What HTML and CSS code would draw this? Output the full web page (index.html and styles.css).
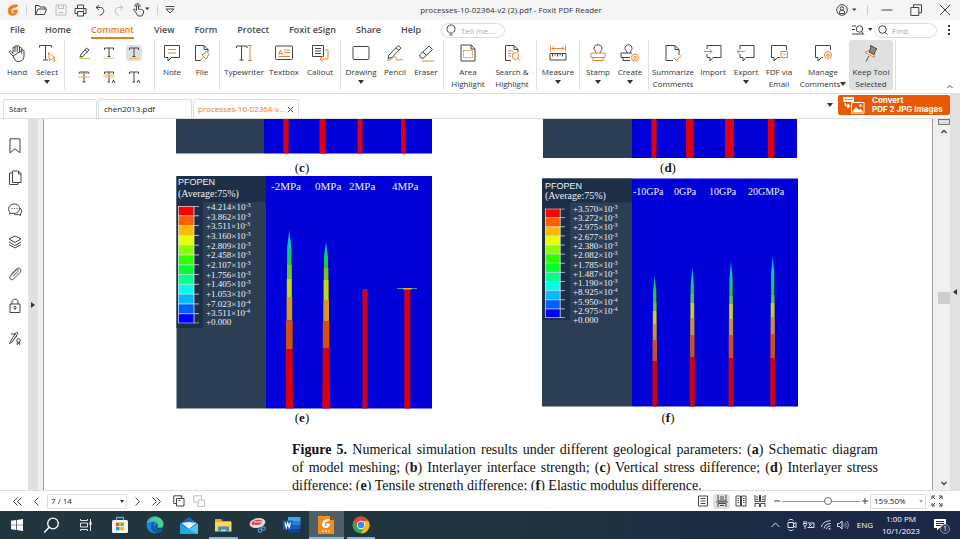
FILE: index.html
```html
<!DOCTYPE html>
<html lang="en">
<head>
<meta charset="utf-8">
<title>processes-10-02364-v2 (2).pdf - Foxit PDF Reader</title>
<link rel="stylesheet" href="styles.css">
</head>
<body>
<header class="titlebar">
  <div class="quick">
    <svg class="logo" width="12" height="12" viewBox="0 0 12 12"><path d="M11 1C6 0 1 2 1 7c0 3 2 4.500 4.500 4.500C9 11.500 10.500 9 10.500 6H6.500L5.500 7.800H8C7.500 9 6.500 9.500 5.500 9.300 3 8.500 4 4 8 3.500 9.500 3.300 10.500 2.500 11 1Z" fill="#f07d1a" stroke="#f07d1a" stroke-width=".5"/></svg>
    <span class="vline"></span>
    <button aria-label="Open"><svg width="14" height="12" viewBox="0 0 14 12"><path d="M1.500 10.500V1.500H5l1 1.500h5v2M1.500 10.500 4 5h8.500l-2 5.500Z"/></svg></button>
    <button aria-label="Save" class="dim"><svg width="12" height="12" viewBox="0 0 12 12"><path d="M1 1h10v10H1ZM3.500 1v3.500h5V1M3.500 8.500h5"/></svg></button>
    <button aria-label="Print"><svg width="13" height="13" viewBox="0 0 13 13"><path d="M3.500 4V1h6v3M3 9.500H1v-5h11v5h-2M3.500 7.500h6V12h-6ZM9 6h1.500"/></svg></button>
    <button aria-label="Undo"><svg width="12" height="12" viewBox="0 0 12 12"><path d="M5 1 2 3.500 5 6M2 3.500h4.500c4.500 0 4.500 7.500-1 7.500"/></svg></button>
    <button aria-label="Redo" class="dim"><svg width="12" height="12" viewBox="0 0 12 12"><path d="m7 1 3 2.500L7 6m3-2.500H5.500C1 3.500 1 11 6 11"/></svg></button>
    <button aria-label="Touch mode"><svg width="18" height="14" viewBox="0 0 18 14"><path d="M3.500 9 2 7.500C1 6.500 2.300 5.500 3.200 6.500l1.300 1V3c0-1.500 2-1.500 2 0v3.500c.5-.8 1.500-.5 1.800.2.500-.7 1.500-.4 1.700.3.700-.5 1.500 0 1.500.8V10l-1.500 3h-4ZM3 4C2.500 1 4.500.700 5.500.700S8.500 1.500 8 4"/><path class="fill" d="M13 4.500h4.500L15.200 7Z"/></svg></button>
    <span class="vline"></span>
    <button aria-label="Customize toolbar"><svg width="10" height="10" viewBox="0 0 10 10"><path d="M.5 1.500h9M1 4h8L5 8Z"/></svg></button>
  </div>
  <h1>processes-10-02364-v2 (2).pdf - Foxit PDF Reader</h1>
  <div class="window-buttons">
    <button aria-label="Account"><svg width="22" height="12" viewBox="0 0 22 12"><circle cx="6" cy="6" r="5.300"/><circle cx="6" cy="4.500" r="1.700"/><path d="M3.500 9.500V8c0-2.200 5-2.200 5 0v1.500Z"/><path class="fill" d="M16 4.500h4.500L18.200 7Z"/></svg></button>
    <span class="vline"></span>
    <button aria-label="Minimize"><svg width="12" height="12" viewBox="0 0 12 12"><path d="M.5 6h11"/></svg></button>
    <button aria-label="Restore"><svg width="12" height="12" viewBox="0 0 12 12"><path d="M.8 3.500h8v8h-8ZM3.500 3V.8h8v8H9"/></svg></button>
    <button aria-label="Close"><svg width="12" height="12" viewBox="0 0 12 12"><path d="m1 1 10 10M11 1 1 11"/></svg></button>
  </div>
</header>

<nav class="menubar">
  <a href="#">File</a><a href="#">Home</a><a href="#" class="active">Comment</a><a href="#">View</a><a href="#">Form</a><a href="#">Protect</a><a href="#">Foxit eSign</a><a href="#">Share</a><a href="#">Help</a>
  <label class="search tell"><svg width="12" height="12" viewBox="0 0 12 12"><path d="M4.500 9C1 7 1 1 6 1s5 6 1.500 8ZM4.500 11h3"/></svg><input type="text" placeholder="Tell me..." aria-label="Tell me"></label>
  <div class="menu-end">
    <button aria-label="Search options"><svg width="22" height="12" viewBox="0 0 22 12"><path d="M0 2h4M0 5.500h3M0 10h11"/><circle cx="7.500" cy="5" r="3.200"/><path d="m9.500 7.500 2.500 3"/><path class="fill" d="M16 4h4.500l-2.300 3Z"/></svg></button>
    <label class="search find"><svg width="10" height="10" viewBox="0 0 10 10"><circle cx="4.500" cy="4.500" r="3.800"/><path d="m7.200 7.200 2.300 2.300"/></svg><input type="text" placeholder="Find" aria-label="Find"></label>
    <button aria-label="More"><svg width="4" height="12" viewBox="0 0 4 12"><path class="fill" d="M1 1h2v2H1ZM1 5h2v2H1ZM1 9h2v2H1Z"/></svg></button>
  </div>
</nav>

<section class="ribbon" aria-label="Comment tools">
  <div class="group">
    <button class="tool w30"><svg width="18" height="18" viewBox="0 0 18 18"><path d="M5 12 1.700 8.500C.8 7.300 2.300 6.500 3.200 7.500L5 9.500V4c0-1.500 2-1.500 2 0v4M7 4V2.500c0-1.500 2.200-1.500 2.200 0V8M9.200 3c0-1.500 2.300-1.500 2.300 0v5.500m0-4c0-1.300 2.200-1.300 2.200 0v5m0-3c.3-1.300 2.300-1 2.300.5V12c0 3-2 5.500-5.500 5.500C7 17.500 6.500 15 5 12Z"/></svg>Hand</button>
    <button class="tool w30"><svg width="18" height="18" viewBox="0 0 18 18"><path d="M1.500 3.500v-2h12v2M7.500 1.500v14M5 16h5"/><path class="o" d="m10.500 8.500 1 8.500 2-2 2 2.500 1.500-1-1.800-2.500H17Z"/></svg>Select<i></i></button>
  </div>
  <div class="group markup">
    <button aria-label="Highlight"><svg width="14" height="14" viewBox="0 0 14 14"><path d="m3.500 9 6-7 2.500 2-6 6.500-3 .5ZM8 4l2.500 2"/><path class="y" d="M2 12.500h11"/></svg></button>
    <button aria-label="Squiggly underline"><svg width="14" height="14" viewBox="0 0 14 14"><path d="M2.500 4V2h9v2M7 2v8.500M5.500 10.500h3"/><path class="y" d="m1.500 12.500 1-.6 2 1 2-1 2 1 2-1 2 1"/></svg></button>
    <button class="on" aria-label="Underline"><svg width="14" height="14" viewBox="0 0 14 14"><path d="M2.500 4V2h9v2M7 2v8.500M5.500 10.500h3"/><path class="y" d="M2 12.500h10"/></svg></button>
    <button aria-label="Strikeout"><svg width="14" height="14" viewBox="0 0 14 14"><path d="M2.500 4V2h9v2M7 2v10M5.500 12h3"/><path class="y" d="M1 3.500h12M1 7h12"/></svg></button>
    <button aria-label="Replace"><svg width="14" height="14" viewBox="0 0 14 14"><path d="M2.500 4V2h9v2M7 2v10M5.500 12H8m2 1 1.500-3L13 13"/><path class="y" d="M1.500 5h11M1.500 7h11"/></svg></button>
    <button aria-label="Insert text"><svg width="14" height="14" viewBox="0 0 14 14"><path d="M2.500 4V2h9v2M7 2v10M5.500 12H8m2 1 1.500-3L13 13"/></svg></button>
  </div>
  <div class="group">
    <button class="tool w30"><svg width="18" height="18" viewBox="0 0 18 18"><path d="M1.500 1.500h15v12h-8L5 17v-3.500H1.500Z"/><path class="o" d="M5 5.500h8M5 9h8"/></svg>Note</button>
    <button class="tool w30"><svg width="18" height="18" viewBox="0 0 18 18"><path d="M8 16.500H2.500v-15H11l4 4V8M11 1.500v4h4"/><path class="o" d="m13 7 3.500 3.500-1 .5-1.500 3-1 1-4-4 1-1 2.500-1ZM10.500 13l-3 3.500"/></svg>File</button>
  </div>
  <div class="group">
    <button class="tool w44"><svg width="18" height="18" viewBox="0 0 18 18"><path d="M1.500 4V2h10.500v2M6.500 2v14M4.500 16h4"/><path class="o" d="M13 1.500h4M15 1.500v15M13 16.500h4"/></svg>Typewriter</button>
    <button class="tool w36"><svg width="18" height="18" viewBox="0 0 18 18"><rect x=".5" y="2" width="17" height="13.500" rx="1"/><path class="o" d="m3.500 11 2-5 2 5M4.200 9.500h2.600M9.500 6H15M9.500 8.500H15M3.500 12.500H15"/></svg>Textbox</button>
    <button class="tool w36"><svg width="18" height="18" viewBox="0 0 18 18"><path d="M1.500 1.500h11v11h-11ZM4 4.500h6M4 7h6M4 9.500h6"/><path class="o" d="M14 6h3v9H9.500m2.500-3-3 3 3 2.500"/></svg>Callout</button>
  </div>
  <div class="group">
    <button class="tool w36"><svg width="18" height="18" viewBox="0 0 18 18"><rect x="1" y="2.500" width="16" height="13" rx="1"/></svg>Drawing<i></i></button>
    <button class="tool w32"><svg width="18" height="18" viewBox="0 0 18 18"><path d="m3 11 9-9.500 3 2.500-9 9.500-4 1ZM10 4l3 2.500"/><path class="o" d="M1 16.500c6-1 7-4.500 9-3.500 1.500 1-1.500 3 1 3s3-1 6 0"/></svg>Pencil</button>
    <button class="tool w30"><svg width="18" height="18" viewBox="0 0 18 18"><path d="m2.500 11 9.500-9 3.500 3.500-9.500 9-2.500-1ZM6 8l3.500 3.500"/><path class="o" d="M5 17h12"/></svg>Eraser</button>
  </div>
  <div class="group">
    <button class="tool w44"><svg width="18" height="18" viewBox="0 0 18 18"><path d="M2 1h10l4 4v12H2ZM12 1v4h4"/><path class="o" stroke-dasharray="2 1" d="M4.500 6.500h9v7h-9Z"/></svg>Area<br>Highlight</button>
    <button class="tool w44"><svg width="18" height="18" viewBox="0 0 18 18"><path d="M8 16.500H2.500v-15H11l4 4V8M11 1.500v4h4"/><path class="o" d="M5 7h5M5 9.500h3M5 12h3m7 2.500 2.500 2.500"/><circle class="o" cx="12.500" cy="12" r="3.300"/></svg>Search &amp;<br>Highlight</button>
  </div>
  <div class="group">
    <button class="tool w38"><svg width="18" height="18" viewBox="0 0 18 18"><path class="o" d="M1.500 1.500v6m15-6v6M3 4.500h12m-10-2-2 2 2 2m8-4 2 2-2 2"/><path d="M1 9.500h16v6.500H1ZM3.500 9.500v3m2.500-3v2m2.500-2v3m2.500-3v2m2.500-2v3"/></svg>Measure<i></i></button>
  </div>
  <div class="group">
    <button class="tool w32"><svg width="18" height="18" viewBox="0 0 18 18"><path d="M7 9c0-2-2-2.500-2-4.500 0-5 8-5 8 0C13 6.500 11 7 11 9"/><path class="o" d="M2 9h14v4.500H2ZM4 13.500v3h10v-3"/></svg>Stamp<i></i></button>
    <button class="tool w32"><svg width="20" height="18" viewBox="0 0 20 18"><path d="M7 9c0-2-2-2.500-2-4.500 0-5 7-5 7 0C12 6.500 10 7 10 9M10 13.500H1V9h11M3 13.500v3h7"/><g class="o"><circle cx="15" cy="13.500" r="3.500"/><circle cx="15" cy="13.500" r="1.300"/></g></svg>Create<i></i></button>
  </div>
  <div class="group">
    <button class="tool w44"><svg width="18" height="18" viewBox="0 0 18 18"><path d="M9 16.500H2v-15h9l4 4V11M11 1.500v4h4"/><path class="o" d="m10 14 2.500 2.500 5-5.500"/></svg>Summarize<br>Comments</button>
    <button class="tool w36"><svg width="18" height="18" viewBox="0 0 18 18"><path d="M3 5V1.500h14v12H9L6 17v-3.500H3V10"/><path class="o" d="M0 7.500h8M5.500 5 8 7.500 5.500 10"/></svg>Import</button>
    <button class="tool w30"><svg width="18" height="18" viewBox="0 0 18 18"><path d="M3 5V1.500h14v12H9L6 17v-3.500H3V10"/><path class="o" d="M0 7.500h8M2.500 5 0 7.500 2.500 10"/></svg>Export<i></i></button>
    <button class="tool w36"><svg width="18" height="18" viewBox="0 0 18 18"><path d="M16.500 6V1.500h-15v12H4V17l3.500-3.500H10"/><path class="o" d="M11 7.500h6.500v6H11Zm2 2 1.500 1.500L16 9.500"/></svg>FDF via<br>Email</button>
    <button class="tool w52"><svg width="18" height="18" viewBox="0 0 18 18"><path d="M16.500 6V1.500h-15v12H4V17l3.500-3.500H9"/><g class="o"><circle cx="14" cy="11" r="3.500"/><circle cx="14" cy="11" r="1.300"/></g></svg>Manage<br><span>Comments<i></i></span></button>
    <button class="tool w44 on"><svg width="18" height="18" viewBox="0 0 18 18"><path class="o tint" d="M3 8.500c2-2 4.500-2 7-.5s3.500 3 2.500 5.500Z"/><path fill="#888" d="M8.500 1.500 15 5l-1.500 1.500-1.500 4L7 8l1.800-4Z"/><path d="m7 12-3 5.500"/></svg>Keep Tool<br>Selected</button>
  </div>
  <button class="collapse" aria-label="Collapse ribbon"><svg width="6" height="5" viewBox="0 0 6 5"><path d="M.5 4 3 1.500 5.500 4"/></svg></button>
</section>

<div class="workspace">
  <div class="center">
    <div class="tabs">
      <a href="#">Start</a><a href="#">chen2013.pdf</a><a href="#" class="active"><span>processes-10-02364-v...</span><svg width="7" height="7" viewBox="0 0 7 7"><path d="m.8.8 5.400 5.400M6.200.8.8 6.200"/></svg></a>
      <div class="tabs-end">
        <i></i>
        <button class="convert"><svg width="22" height="18" viewBox="0 0 22 18"><path fill="#fff" stroke="none" d="M0 1h11v5H0Z"/><path stroke="#e85a05" d="M1.500 3.500h2m1 0h2m1 0h2"/><path stroke="#fff" stroke-width="1.500" d="M2 7c0 3 1.500 3 4 3M4.500 8l2 2-2 2"/><path stroke="#fff" d="M8.500 6.500h12.500v10.500H8.500Z"/><path fill="#fff" stroke="none" d="m9 16 4-5 3 3 1.500-1.500L20.500 16Z"/><circle cx="17.500" cy="9.500" r="1.300" fill="#fff" stroke="none"/></svg><span>Convert<br>PDF 2 JPG Images</span></button>
      </div>
    </div>
    <div class="viewer">
      <aside class="panels">
        <button aria-label="Bookmarks"><svg width="14" height="16" viewBox="0 0 14 16"><path d="M2 .8h10v14l-5-4-5 4Z"/></svg></button>
        <button aria-label="Pages"><svg width="14" height="16" viewBox="0 0 14 16"><path d="M4.500 1h6L13 3.500v9H4.500ZM10.500 1v3H13M4 3H1.500v11.500H10v-2"/></svg></button>
        <button aria-label="Comments"><svg width="14" height="14" viewBox="0 0 14 14"><path d="M2 9.500C-1 6 1 1 6 1s7 4 4.500 7.500C8 11 5 10.500 4 10.200L1.500 11Z"/><path d="M12 5c2 2 2 4 .5 5.500v2l-2-1c-2 .5-4 .2-5-1M3.500 5.500h1m1.500 0h1m1.500 0h1"/></svg></button>
        <button aria-label="Layers"><svg width="14" height="14" viewBox="0 0 14 14"><path d="m7 1 6 3-6 3.500L1 4ZM1 7l6 3.500L13 7M1 9.500 7 13l6-3.500"/></svg></button>
        <button aria-label="Attachments"><svg width="14" height="14" viewBox="0 0 14 14"><path d="m5 9.500 5-5.300c1-1.200-.5-2.400-1.500-1.400L2.500 9c-2 2.500 1 5 3 3L12 5.500c2.500-3-1-6-3.500-3.500L3 7.500"/></svg></button>
        <button aria-label="Security"><svg width="14" height="16" viewBox="0 0 14 16"><path d="M2 6h10v8.500H2ZM4 6V4c0-4 6-4 6 0v2M7 10.500V12"/><circle cx="7" cy="9.500" r="1.200"/></svg></button>
        <button aria-label="Signatures"><svg width="14" height="14" viewBox="0 0 14 14"><path d="M2 11.500 7.500 2c1-1.500 3-.5 2 1.200L4 11l-2.500 1.500ZM3 3h5M6 8l3-3"/><circle cx="10.500" cy="9.500" r="1.800"/><path d="M9.500 11 9 13.500l1.500-1 1.500 1-.5-2.500"/></svg></button>
      </aside>
      <button class="handle" aria-label="Expand panel"><svg width="4" height="6" viewBox="0 0 4 6"><path class="fill" d="M0 0v6l4-3Z"/></svg></button>
      <main class="canvas">
        <article class="page">
          <svg width="0" height="0" class="defs"><defs>
            <symbol id="scale" viewBox="0 0 21 120" preserveAspectRatio="none">
              <g stroke="none"><path fill="#f00" d="M0 0h16v10H0z"/><path fill="#ff5d00" d="M0 10h16v10H0z"/><path fill="#ffb900" d="M0 20h16v10H0z"/><path fill="#e8ff00" d="M0 30h16v10H0z"/><path fill="#8bff00" d="M0 40h16v10H0z"/><path fill="#2eff00" d="M0 50h16v10H0z"/><path fill="#00ff2e" d="M0 60h16v10H0z"/><path fill="#00ff8b" d="M0 70h16v10H0z"/><path fill="#00ffe8" d="M0 80h16v10H0z"/><path fill="#00b9ff" d="M0 90h16v10H0z"/><path fill="#005dff" d="M0 100h16v10H0z"/><path fill="#00f" d="M0 110h16v10H0z"/></g>
              <path stroke="#dde6ee" stroke-width=".8" d="M.4 0v120M16 0v120M0 .4h21M0 10h21M0 20h21M0 30h21M0 40h21M0 50h21M0 60h21M0 70h21M0 80h21M0 90h21M0 100h21M0 110h21M0 119.600h21"/>
            </symbol>
            <linearGradient id="tip" x2="0" y2="1"><stop stop-color="#0090ff"/><stop offset=".2" stop-color="#00c8d8"/><stop offset=".5" stop-color="#16c862"/><stop offset=".8" stop-color="#25d015"/><stop offset="1" stop-color="#80d020"/></linearGradient>
          </defs></svg>
          <div class="figures">
            <figure>
              <svg viewBox="176 119 256 40" role="img"><path fill="#2c3e54" d="M176 119h88v34.500h-88z"/><path fill="#0000d8" d="M264 119h168v34.500H264z"/><path fill="#dc0010" d="M283.300 119h5.200v34.500h-5.200zM319.500 119h6v34.500h-6zM357.500 119h5v34.500h-5zM401 119h4l.7 34.500h-4.500z"/></svg>
              <figcaption>(<b>c</b>)</figcaption>
            </figure>
            <figure>
              <svg viewBox="542 119 256 40" role="img"><path fill="#2c3e54" d="M543 119h89v39h-89z"/><path fill="#0000d8" d="M632 119h165v39H632z"/><path fill="#dc0010" d="M651.500 119h5v39h-5zM686 119h7.500v39H686zM725 119h9v39h-9zM768 119h6.500v39H768z"/></svg>
              <figcaption>(<b>d</b>)</figcaption>
            </figure>
            <figure>
              <svg viewBox="176 176 256 233" role="img">
                <path fill="#2c3e54" d="M176.500 176H266v232.500h-89.500z"/><path fill="#1d2e48" d="M176.500 176H266v26h-63v126h-26.500z"/><path fill="#0000d8" d="M266 176h166v232.500H266z"/>
                <use href="#scale" x="178" y="206" width="21" height="117.500"/>
                <text x="178" y="185" class="sans">PFOPEN</text><text x="178" y="197" class="t10">(Average:75%)</text>
                <g class="t9"><text x="206" y="210">+4.214×10<tspan dy="-3">-3</tspan></text><text x="206" y="220">+3.862×10<tspan dy="-3">-3</tspan></text><text x="206" y="229">+3.511×10<tspan dy="-3">-3</tspan></text><text x="206" y="239">+3.160×10<tspan dy="-3">-3</tspan></text><text x="206" y="249">+2.809×10<tspan dy="-3">-3</tspan></text><text x="206" y="258">+2.458×10<tspan dy="-3">-3</tspan></text><text x="206" y="268">+2.107×10<tspan dy="-3">-3</tspan></text><text x="206" y="278">+1.756×10<tspan dy="-3">-3</tspan></text><text x="206" y="287">+1.405×10<tspan dy="-3">-3</tspan></text><text x="206" y="297">+1.053×10<tspan dy="-3">-3</tspan></text><text x="206" y="307">+7.023×10<tspan dy="-3">-4</tspan></text><text x="206" y="316">+3.511×10<tspan dy="-3">-4</tspan></text><text x="206" y="325">+0.000</text></g>
                <g class="t11"><text x="271" y="190">-2MPa</text><text x="315" y="190">0MPa</text><text x="349" y="190">2MPa</text><text x="392" y="190">4MPa</text></g>
                <path fill="url(#tip)" d="M289.300 230l2.200 18v31.500h-4.400V248zM326 242l2 15v23h-4v-23z"/>
                <path fill="#70c820" d="M287 265h4.800v14.500H287zM323.800 268h4.600v12h-4.600z"/>
                <path fill="#c8d810" d="M286.800 279h5v18h-5zM323.600 280h5v20h-5z"/><path fill="#d8981a" d="M286.600 297h5.600v23.500h-5.600zM323.300 300h5.700v21h-5.700z"/><path fill="#d85008" d="M286 320.500h6.600V349H286zM322.800 321h6.600v27.500h-6.600z"/><path fill="#d8000c" d="M286 349h6.500l.5 59.500h-7.300zM322.700 348.500h6.700l.8 60h-7.800zM404.300 289h6v119.500h-6z"/><path fill="#c80420" d="M362.500 289h5v119.500h-5z"/><path fill="#3898a8" d="M397 288h20v1h-20z"/><path fill="#c8b838" d="M403 288h9v1.500h-9z"/>
              </svg>
              <figcaption>(<b>e</b>)</figcaption>
            </figure>
            <figure>
              <svg viewBox="542 176 256 233" role="img">
                <path fill="#2c3e54" d="M542 178.500h90v228h-90z"/><path fill="#1d2e48" d="M542 178.500h90v24h-62V320h-28z"/><path fill="#0000d8" d="M632 178.500h166.500v228H632z"/>
                <use href="#scale" x="545" y="208.500" width="20" height="109.500"/>
                <text x="545" y="189" class="sans">PFOPEN</text><text x="545" y="199" class="t10">(Average:75%)</text>
                <g class="t9"><text x="573" y="212">+3.570×10<tspan dy="-3">-3</tspan></text><text x="573" y="221">+3.272×10<tspan dy="-3">-3</tspan></text><text x="573" y="230">+2.975×10<tspan dy="-3">-3</tspan></text><text x="573" y="240">+2.677×10<tspan dy="-3">-3</tspan></text><text x="573" y="249">+2.380×10<tspan dy="-3">-3</tspan></text><text x="573" y="258">+2.082×10<tspan dy="-3">-3</tspan></text><text x="573" y="268">+1.785×10<tspan dy="-3">-3</tspan></text><text x="573" y="277">+1.487×10<tspan dy="-3">-3</tspan></text><text x="573" y="286">+1.190×10<tspan dy="-3">-3</tspan></text><text x="573" y="295">+8.925×10<tspan dy="-3">-4</tspan></text><text x="573" y="305">+5.950×10<tspan dy="-3">-4</tspan></text><text x="573" y="314">+2.975×10<tspan dy="-3">-4</tspan></text><text x="573" y="323">+0.000</text></g>
                <g class="t10"><text x="633" y="195">-10GPa</text><text x="674" y="195">0GPa</text><text x="709" y="195">10GPa</text><text x="748" y="195">20GMPa</text></g>
                <path fill="url(#tip)" d="M654.700 276l1.600 15v20h-3.200v-20zM692.300 267l1.600 18v19h-3.200v-19zM731 261l1.600 18v26h-3.200v-26zM772.700 256l1.600 18v29h-3.200v-29z"/>
                <path fill="#68b848" d="M653 302h3.400v9H653zM690.600 294h3.400v10h-3.400zM729.300 296h3.400v9h-3.400zM771 295h3.400v8H771z"/>
                <path fill="#c8cc30" d="M652.800 311h3.800v13h-3.800zM690.400 303h3.800v15h-3.800zM729 304h3.900v15H729zM770.700 303h3.900v14h-3.900z"/>
                <path fill="#c89040" d="M652.700 324h4v16h-4zM690.200 318h4.200v17h-4.200zM728.900 319h4.200v16h-4.200zM770.600 317h4.200v17h-4.200z"/>
                <path fill="#c85028" d="M652.500 340h4.500v21h-4.500zM690 335h4.500v22H690zM728.700 335h4.600v23h-4.600zM770.400 334h4.600v24h-4.600z"/>
                <path fill="#c80418" d="M652.400 361h4.700v45.500h-4.700zM689.900 357h4.900v49.500h-4.900zM728.600 358h4.900v48.500h-4.900zM770.300 358h4.900v48.500h-4.900z"/>
              </svg>
              <figcaption>(<b>f</b>)</figcaption>
            </figure>
          </div>
          <p><span class="line"><b>Figure 5.</b> Numerical simulation results under different geological parameters: (<b>a</b>) Schematic diagram</span> <span class="line">of model meshing; (<b>b</b>) Interlayer interface strength; (<b>c</b>) Vertical stress difference; (<b>d</b>) Interlayer stress</span> <span class="line last">difference; (<b>e</b>) Tensile strength difference; (<b>f</b>) Elastic modulus difference.</span></p>
        </article>
      </main>
      <div class="scrollbar">
        <span class="split"></span>
        <button aria-label="Scroll up"><svg width="6" height="5" viewBox="0 0 6 5"><path stroke-width="1.400" d="M.5 4 3 1.500 5.500 4"/></svg></button>
        <div class="track"><span class="thumb"></span></div>
        <button aria-label="Scroll down"><svg width="6" height="5" viewBox="0 0 6 5"><path stroke-width="1.400" d="M.5 1 3 3.500 5.500 1"/></svg></button>
      </div>
    </div>
  </div>
  <button class="handle right" aria-label="Expand right panel"><svg width="4" height="6" viewBox="0 0 4 6"><path class="fill" d="M4 0v6L0 3Z"/></svg></button>
</div>

<footer class="status">
  <div class="pager">
    <button aria-label="First page"><svg width="9" height="9" viewBox="0 0 9 9"><path d="m4.500.5-4 4 4 4m4-8-4 4 4 4"/></svg></button>
    <button aria-label="Previous page"><svg width="5" height="9" viewBox="0 0 5 9"><path d="m4.500.5-4 4 4 4"/></svg></button>
    <span class="combo"><select aria-label="Page"><option>7 / 14</option></select><i></i></span>
    <button aria-label="Next page"><svg width="5" height="9" viewBox="0 0 5 9"><path d="m.5.5 4 4-4 4"/></svg></button>
    <button aria-label="Last page"><svg width="9" height="9" viewBox="0 0 9 9"><path d="m.5.5 4 4-4 4m4-8 4 4-4 4"/></svg></button>
    <button aria-label="Previous view"><svg width="12" height="12" viewBox="0 0 12 12"><path d="M3.500 3.500H11V11H3.500ZM3 8.500H.8V.8h8V3M9 2 7.500.8M7.500 5.500H5.500"/></svg></button>
    <button aria-label="Next view" class="dim"><svg width="12" height="12" viewBox="0 0 12 12"><path d="M5 5h6.500v6.500H5ZM8.500 4.500V.8H.8v6.500h3"/></svg></button>
  </div>
  <div class="zoom">
    <button class="layout" aria-label="Single page"><svg width="12" height="12" viewBox="0 0 12 12"><path d="M1.500 1h9v10h-9ZM3.500 3.500h5M3.500 6h5M3.500 8.500h5"/></svg></button>
    <button class="layout on" aria-label="Continuous"><svg width="12" height="12" viewBox="0 0 12 12"><path d="M2 0v6h8V0M2 12V8.500h8V12M4 2h4M4 4h4M0 7h12M4 10.500h4"/></svg></button>
    <button class="layout" aria-label="Facing"><svg width="12" height="12" viewBox="0 0 12 12"><path d="M1 1h4.500v10H1ZM6.500 1H11v10H6.500ZM2.500 3.500H4m-1.500 2H4m-1.500 2H4m4-4h1.500m-1.500 2h1.500m-1.500 2h1.500"/></svg></button>
    <button class="layout" aria-label="Continuous facing"><svg width="12" height="12" viewBox="0 0 12 12"><path d="M1 0v6.500h4.500V0M6.500 0v6.500H11V0M1 12V8.500h4.500V12M6.500 12V8.500H11V12M2 2h2M2 4.500h2M8 2h2M8 4.500h2"/></svg></button>
    <button aria-label="Zoom out"><svg width="6" height="6" viewBox="0 0 6 6"><path d="M0 3h6"/></svg></button>
    <input type="range" min="0" max="100" value="60" aria-label="Zoom level">
    <button aria-label="Zoom in"><svg width="6" height="6" viewBox="0 0 6 6"><path d="M0 3h6M3 0v6"/></svg></button>
    <span class="combo small"><select aria-label="Zoom"><option>159.50%</option></select><i></i></span>
    <button class="full" aria-label="Full screen"><svg width="12" height="12" viewBox="0 0 12 12"><path d="M1 4V1h3M1 1l3 3M8 1h3v3M11 1 8 4M1 8v3h3M1 11l3-3M11 8v3H8M11 11 8 8"/></svg></button>
  </div>
</footer>

<div class="taskbar">
  <div class="apps">
    <button aria-label="Start"><svg width="12" height="12" viewBox="0 0 12 12"><path fill="#fff" stroke="none" d="M0 1.700 5.300 1v4.700H0ZM6 .9 12 0v5.700H6ZM0 6.300h5.300V11L0 10.300ZM6 6.300h6V12l-6-.9Z"/></svg></button>
    <button aria-label="Search"><svg width="17" height="17" viewBox="0 0 17 17"><circle cx="10" cy="6.500" r="5.300" stroke="#fff" stroke-width="1.300"/><path stroke="#fff" stroke-width="1.500" d="m6.200 10.300-5 5.200"/></svg></button>
    <button aria-label="Task view"><svg width="12" height="12" viewBox="0 0 12 12"><path stroke="#dfe6e8" d="M.5 0v1.500h7V0M.5 4h7v4h-7ZM.5 12v-1.500h7V12M10.500 0v12"/><path fill="#fff" stroke="none" d="M9.500 3h2v3h-2z"/></svg></button>
    <button aria-label="Store"><svg width="18" height="18" viewBox="0 0 18 18"><path stroke="#35b5e8" stroke-width="1.300" d="M5.500 5V1.500h7V5"/><rect x="1" y="4" width="16" height="13" rx="1.500" fill="#f5f5f5"/><path fill="#f25022" d="M5 6.500h3.500V10H5z"/><path fill="#7fba00" d="M9.300 6.500h3.500V10H9.300z"/><path fill="#00a4ef" d="M5 10.800h3.500v3.500H5z"/><path fill="#ffb900" d="M9.300 10.800h3.500v3.500H9.300z"/></svg></button>
    <button aria-label="Edge"><svg width="18" height="18" viewBox="0 0 18 18"><circle cx="9" cy="9" r="8.500" fill="#1686d8"/><path fill="#4ed08a" d="M1 7C3-2 17-1 17.500 8c0 3-3.500 4-6 3 2-2 0-5-3-5.300C5 5 2 6.500 1 7Z"/><path fill="#36b5e0" d="M1 7c1-5 6-7.500 10-6-4 0-6 2-6 5-1 0-3 .3-4 1Z"/><path fill="#0c59a4" d="M5 9c0-2 2-3.500 4-3.300C6 8 7.500 14 14.500 14.500 11 19 4 16 5 9Z"/><path fill="#21353d" d="M10.500 8c.8 1 .5 2 0 2.600.5 2 4 2.400 6.500 1.200l-1.500 2C11 14.500 7.500 11 10.500 8Z"/></svg></button>
    <button aria-label="Mail"><svg width="18" height="17" viewBox="0 0 18 17"><path fill="#0f6cbd" d="M0 6.500 9 0l9 6.500V17H0Z"/><path fill="#e9f4fb" d="m1.500 6 7.500-1 7.500 1-7.500 6Z"/><path fill="#1fa7e8" d="m0 6.500 9 6 9-6V17H0Z"/><path fill="#55c5f5" d="m9 12.500 9-6V17Z"/></svg></button>
    <button aria-label="File Explorer" class="run"><svg width="17" height="15" viewBox="0 0 17 15"><path fill="#e8a821" d="M0 1h6l1.500 2H16v4H0Z"/><path fill="#ffd35c" d="M0 4h16.500v9.500H0Z"/><path fill="#3c8ed0" d="M3 8.500h11V14h-3v-2.500H6V14H3Z"/></svg></button>
    <button aria-label="Snip"><svg width="17" height="16" viewBox="0 0 17 16"><ellipse cx="8.500" cy="6" rx="8" ry="4.800" transform="rotate(-12 8.500 6)" fill="#ead3d3"/><ellipse cx="8" cy="5.500" rx="5.500" ry="2.500" transform="rotate(-12 8 5.500)" fill="#d84550"/><path stroke="#e8f0f5" d="M5 5h10M5 8l8 2"/><g stroke="#4ba0dc" stroke-width="1.200"><circle cx="11" cy="13.500" r="1.700"/><circle cx="14.500" cy="11.500" r="1.700"/></g></svg></button>
    <button aria-label="Word"><svg width="18" height="16" viewBox="0 0 18 16"><path fill="#41a5ee" d="M5 0h12.500v4H5z"/><path fill="#2b7cd3" d="M5 4h12.500v4H5z"/><path fill="#185abd" d="M5 8h12.500v4H5z"/><path fill="#103f91" d="M5 12h12.500v3.500H5z"/><path fill="#185abd" d="M0 3.500h9.500v9H0z"/><path stroke="#fff" stroke-width="1.200" d="M2 5.500 3.300 10.500 4.700 6 6.200 10.500 7.500 5.500"/></svg></button>
    <button aria-label="Foxit PDF Reader" class="run current"><svg width="18" height="18" viewBox="0 0 18 18"><path fill="#f58a1f" d="M1 0h12l4 4v14H1Z"/><path fill="#8e4b13" d="M13 0v4h4Z"/><path fill="#fff" d="M13 3C8 2.500 5 5 5 8.500 5 11 7 12 9 12c2.500 0 4-2 4-4.500H9.500L9 9h1.700C10 10 9 10.300 8.300 10 7 9 8 6 10.500 5.500 12 5 12.500 4.500 13 3Z"/><path stroke="#fff" stroke-dasharray="2 1" d="M5 15h8"/></svg></button>
    <button aria-label="Chrome" class="run"><svg width="18" height="18" viewBox="0 0 18 18"><circle cx="9" cy="9" r="8.500" fill="#34a853"/><path fill="#ea4335" d="M1.600 4.700A8.500 8.500 0 0 1 16.400 4.700L9 5Z M1.600 4.700 5.500 11 9 5Z"/><path fill="#fbbc05" d="M16.400 4.700A8.500 8.500 0 0 1 9 17.500L12.700 11 12 5Z"/><circle cx="9" cy="9" r="4.200" fill="#fff"/><circle cx="9" cy="9" r="3.300" fill="#4285f4"/></svg></button>
  </div>
  <div class="tray">
    <button aria-label="Hidden icons"><svg width="9" height="6" viewBox="0 0 9 6"><path d="m.5 5 4-4 4 4"/></svg></button>
    <button aria-label="Meet now"><svg width="10" height="12" viewBox="0 0 10 12"><path d="M1 3.500h5.500v5H1ZM6.500 5 9 3.500v5L6.500 7M1.500 1.500C3 0 5 0 6.500 1.500M1.500 10.500c1.500 1.500 3.500 1.500 5 0"/></svg></button>
    <button aria-label="Battery"><svg width="12" height="10" viewBox="0 0 12 10"><path d="M4.500 3h6.500v4.500H4.500M1 1v2m2-2v2M.5 3.500h3c0 2-.5 2.500-1.500 2.500S.5 5.500.5 3.500ZM2 6v3M6 4l2.500 2.500M8.500 4 6 6.500"/></svg></button>
    <button aria-label="Network"><svg width="10" height="10" viewBox="0 0 10 10"><path d="M.5 7C1 3.500 4 1 9.500.8M3 8.500C3.500 5.500 5.500 3.700 9.500 3.500M5.500 9c.3-1.800 1.500-3 4-3"/><path stroke="none" fill="#dfe5ee" d="M7.500 9.500c0-1 .8-1.800 2-1.800v1.800Z"/></svg></button>
    <button aria-label="Volume"><svg width="12" height="10" viewBox="0 0 12 10"><path d="M.5 3.500h2L5 1v8L2.500 6.500h-2Z"/><path opacity=".6" d="M6.500 3.500c.7 1 .7 2 0 3M8.300 2.300c1.200 1.700 1.200 3.700 0 5.400M10 1c1.800 2.500 1.800 5.500 0 8"/></svg></button>
    <span class="lang">ENG</span>
    <time>1:00 PM<br>10/1/2023</time>
    <button class="notice" aria-label="Notifications"><svg width="12" height="12" viewBox="0 0 12 12"><path fill="#fff" stroke="none" d="M0 0h12v9H5.500L3 11.500V9H0Z"/><path stroke="#1c2b48" d="M2 2.500h8M2 4.500h8M2 6.500h5"/></svg><b>1</b></button>
  </div>
</div>
</body>
</html>
```
FILE: styles.css
```css
* { box-sizing: border-box; }
html, body { height: 100%; }
body {
  margin: 0;
  display: flex;
  flex-direction: column;
  overflow: hidden;
  background: #fff;
  color: #333;
  font: 8px/12px "Open Sans", "Noto Sans", sans-serif;
}
button {
  padding: 0;
  border: 0;
  background: none;
  color: inherit;
  font: inherit;
  display: flex;
  align-items: center;
  justify-content: center;
}
a { color: inherit; text-decoration: none; }
svg { fill: none; stroke: #444; flex: none; display: block; }
svg .o { stroke: #ec8436; }
svg .y { stroke: #e9b949; }
svg .tint { fill: #fde3cd; }
svg .fill { fill: #333; stroke: none; }
i {
  display: block;
  border: 3px solid transparent;
  border-top: 4px solid #333;
  border-bottom: 0;
}
.dim svg { stroke: #bbb; }
.vline { width: 1px; height: 10px; background: #ccc; }

.titlebar {
  flex: none;
  height: 20px;
  background: #f5f5f5;
  display: grid;
  grid-template-columns: 1fr auto 1fr;
  align-items: center;
}
.titlebar h1 { margin: 0; font-size: 8px; line-height: 12px; font-weight: 400; padding-left: 62px; }
.quick { display: flex; align-items: center; gap: 7px; padding-left: 7px; }
.window-buttons { display: flex; align-items: center; justify-content: flex-end; gap: 17px; padding-right: 9px; }
.window-buttons .vline { margin: 0 -4px 0 -8px; }

.menubar {
  flex: none;
  height: 20px;
  display: flex;
  align-items: center;
  font-size: 9px;
  font-weight: 600;
  color: #4a4a4a;
}
.menubar > a { height: 18px; line-height: 18px; margin-left: 20px; }
.menubar > a:first-child { margin-left: 10px; }
.menubar > a.active { color: #ec7a1c; border-bottom: 2px solid #ec7a1c; }
.search {
  display: flex;
  align-items: center;
  gap: 4px;
  height: 15px;
  padding: 0 3px;
  border: 1px solid #ddd;
  border-radius: 8px;
}
.search input { width: 100%; min-width: 0; padding: 0; border: 0; outline: 0; background: none; font: 8px "Open Sans", sans-serif; }
.search input::placeholder { color: #aaa; }
.tell { width: 64px; margin-left: 20px; }
.find { width: 63px; }
.menu-end { margin-left: auto; padding-right: 9px; display: flex; align-items: center; }
.menu-end > button:last-child { margin-left: 10px; }

.ribbon { flex: none; height: 54px; display: flex; border-bottom: 1px solid #ddd; }
.group { display: flex; height: 50px; padding: 0 2px; border-right: 1px solid #e0e0e0; }
.tool {
  flex-direction: column;
  justify-content: flex-start;
  padding-top: 4px;
  text-align: center;
  white-space: nowrap;
}
.tool > svg { margin-bottom: 4px; }
.tool > i { margin-top: 2px; }
.tool span { display: flex; align-items: center; }
.on { background: #e0e0e0; border-radius: 3px; }
.w30 { width: 30px; }
.w32 { width: 32px; }
.w36 { width: 36px; }
.w38 { width: 38px; }
.w44 { width: 44px; }
.w52 { width: 52px; }
.markup { display: grid; grid-template-columns: repeat(3, 16px); grid-template-rows: 16px 16px; gap: 8px 9px; padding: 5px 12px 0 11px; }
.collapse { margin-left: auto; align-self: flex-end; padding: 0 7px 4px 0; }

.workspace { flex: 1; min-height: 0; display: flex; }
.center { flex: 1; min-width: 0; display: flex; flex-direction: column; }
.tabs { flex: none; height: 25px; display: flex; align-items: flex-end; padding-left: 3px; gap: 1px; border-bottom: 1px solid #ddd; }
.tabs > a {
  width: 94px;
  height: 19px;
  padding: 0 5px;
  border: 1px solid #ddd;
  border-bottom: 0;
  border-radius: 3px 3px 0 0;
  display: flex;
  align-items: center;
  justify-content: space-between;
  white-space: nowrap;
  color: #222;
}
.tabs > a.active { width: 106px; padding: 0 4px; color: #ec7a1c; }
.tabs-end { margin-left: auto; align-self: flex-start; display: flex; align-items: center; gap: 5px; padding-top: 1px; }
.convert { width: 112px; height: 20px; gap: 7px; padding-left: 5px; justify-content: flex-start; background: #e85a05; border-radius: 2px; color: #fff; text-align: left; font: bold 8px/9px Inter, sans-serif; white-space: nowrap; }

.viewer { flex: 1; min-height: 0; display: flex; }
.panels { width: 28px; flex: none; display: flex; flex-direction: column; padding: 11px 0 0 2px; }
.panels button { height: 32px; width: 26px; }
.handle { width: 10px; flex: none; background: #e1e1e1; }
.canvas { flex: 1; min-width: 0; overflow: hidden; background: #f0f0f0; padding: 0 5px; }
.page { height: 100%; border: solid #999; border-width: 0 1px; background: #fff; overflow: hidden; }
.defs { position: absolute; }
.figures { display: grid; grid-template-columns: 256px 256px; column-gap: 110px; padding-left: 132px; }
.figures figure { margin: 0; }
.figures figure > svg { width: 100%; height: auto; stroke: none; }
figcaption { text-align: center; font: 13px/17px "Liberation Serif", serif; color: #111; padding-right: 4px; }
.figures text { fill: #eef2f6; font-family: "Liberation Serif", serif; stroke: none; }
.figures .sans { font: 9px "Liberation Sans", sans-serif; }
.t9 { font-size: 9px; }
.t9 tspan { font-size: 6px; }
.t10 { font-size: 10px; }
.t11 { font-size: 11px; }
.page p { margin: 15px 54px 0 248px; font: 14px/18px "Liberation Serif", serif; color: #111; }
.line { display: block; white-space: nowrap; text-align: justify; text-align-last: justify; }
.last { text-align-last: left; }

.scrollbar { width: 12px; flex: none; display: flex; flex-direction: column; background: #f0f0f0; }
.split { height: 6px; border: 1px solid #777; background: #ddd; }
.scrollbar button { height: 13px; }
.track { flex: 1; display: flex; flex-direction: column; }
.track::before { content: ""; flex: 47; }
.track::after { content: ""; flex: 53; }
.thumb { height: 12px; background: #cdcdcd; }

.status { flex: none; height: 21px; display: flex; justify-content: space-between; align-items: center; border-top: 1px solid #ddd; color: #222; }
.pager, .zoom { display: flex; align-items: center; }
.pager { gap: 12px; padding-left: 13px; }
.pager > .combo { margin: 0 -4px; }
.pager > button:last-child { margin-left: -4px; }
.combo { width: 80px; height: 15px; border: 1px solid #ddd; display: flex; align-items: center; padding-right: 2px; }
.combo select { flex: 1; min-width: 0; appearance: none; border: 0; padding: 0 3px; background: none; color: #222; font: 8px/12px "Open Sans", sans-serif; }
.combo i { border-width: 3px 2px 0; }
.small { width: 56px; }
.small i { border-top-color: #aaa; }
.zoom { gap: 2px; padding-right: 17px; }
.layout { width: 17px; height: 15px; }
.layout + button:not(.layout) { margin-left: 4px; }
.full { margin-left: 3px; }
.zoom input { appearance: none; width: 78px; height: 9px; margin: 0; background: linear-gradient(#999, #999) center / 100% 1px no-repeat; }
.zoom input::-webkit-slider-thumb { appearance: none; width: 8px; height: 8px; border: 1px solid #666; border-radius: 50%; background: #fff; }

.taskbar { flex: none; height: 28px; display: flex; justify-content: space-between; background: linear-gradient(90deg, #21363e, #20343e 55%, #1b2a46 82%, #1b2849); color: #fff; }
.apps { width: 378px; display: grid; grid-template-columns: repeat(11, 1fr); }
.apps svg { stroke: none; }
.apps .run { border-bottom: 2px solid #76b9ed; padding-top: 2px; margin: 0 3px; }
.apps .current { background: #4d6068; margin: 0; }
.tray { display: flex; align-items: center; padding-right: 10px; }
.tray svg { stroke: #dfe5ee; }
.tray > button { width: 17px; }
.lang { margin: 0 9px 0 5px; }
.tray time { text-align: center; width: 38px; white-space: nowrap; }
.tray > .notice { position: relative; margin-left: 10px; width: 20px; height: 18px; }
.notice b { position: absolute; right: 0; bottom: 0; width: 10px; height: 10px; border-radius: 50%; background: #2d3644; border: 1px solid #8a93a0; font: 7px/8px "Open Sans", sans-serif; }
```
